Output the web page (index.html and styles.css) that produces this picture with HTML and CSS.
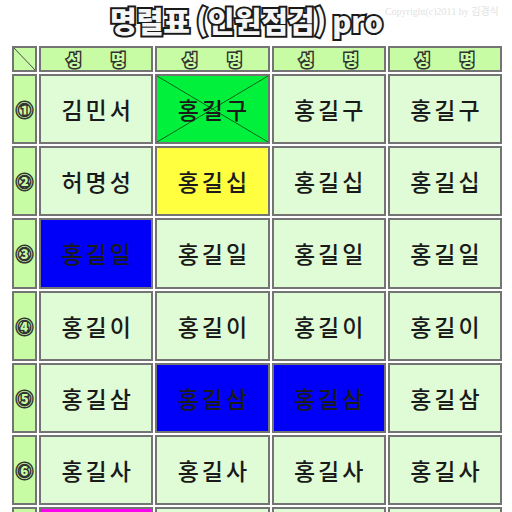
FILE: index.html
```html
<!DOCTYPE html>
<html lang="ko">
<head>
<meta charset="utf-8">
<link rel="stylesheet" href="styles.css">
</head>
<body>
<header class="top">
  <h1 class="title">명렬표 (인원점검) pro</h1>
  <span class="copy">Copyright(c)2011 by 김경식</span>
</header>
<table class="roster">
  <thead>
    <tr>
      <th class="corner"></th>
      <th class="head">성　명</th>
      <th class="head">성　명</th>
      <th class="head">성　명</th>
      <th class="head">성　명</th>
    </tr>
  </thead>
  <tbody>
    <tr>
      <th class="num">①</th>
      <td>김민서</td>
      <td class="green">홍길구</td>
      <td>홍길구</td>
      <td>홍길구</td>
    </tr>
    <tr>
      <th class="num">②</th>
      <td>허명성</td>
      <td class="yellow">홍길십</td>
      <td>홍길십</td>
      <td>홍길십</td>
    </tr>
    <tr>
      <th class="num">③</th>
      <td class="blue">홍길일</td>
      <td>홍길일</td>
      <td>홍길일</td>
      <td>홍길일</td>
    </tr>
    <tr>
      <th class="num">④</th>
      <td>홍길이</td>
      <td>홍길이</td>
      <td>홍길이</td>
      <td>홍길이</td>
    </tr>
    <tr>
      <th class="num">⑤</th>
      <td>홍길삼</td>
      <td class="blue">홍길삼</td>
      <td class="blue">홍길삼</td>
      <td>홍길삼</td>
    </tr>
    <tr>
      <th class="num">⑥</th>
      <td>홍길사</td>
      <td>홍길사</td>
      <td>홍길사</td>
      <td>홍길사</td>
    </tr>
    <tr>
      <th class="num"></th>
      <td class="magenta"></td>
      <td></td>
      <td></td>
      <td></td>
    </tr>
  </tbody>
</table>
</body>
</html>
```

FILE: styles.css
```css
html, body {
  margin: 0;
  padding: 0;
  background: #ffffff;
  overflow: hidden;
}
body {
  width: 512px;
  height: 512px;
  font-family: "Noto Sans CJK KR", "Noto Sans", sans-serif;
}
.top {
  display: flex;
  align-items: flex-start;
  height: 44px;
  padding-left: 110px;
  box-sizing: border-box;
}
.title {
  margin: 0;
  padding-top: 2px;
  font-size: 29px;
  line-height: 36px;
  font-weight: 900;
  letter-spacing: 0;
  word-spacing: -2px;
  color: #f6f6f6;
  -webkit-text-stroke: 4px #1a1a1a;
  paint-order: stroke fill;
  white-space: nowrap;
}
.copy {
  margin-left: 2px;
  margin-top: 3px;
  font-family: "Liberation Serif", "Noto Sans CJK KR", serif;
  font-size: 10px;
  color: #e2e2e2;
  white-space: nowrap;
}
.roster {
  margin-left: 10px;
  width: 494px;
  border-collapse: separate;
  border-spacing: 2px;
  table-layout: fixed;
}
.roster th, .roster td {
  border: 2px solid #747474;
  padding: 0;
  text-align: center;
  vertical-align: middle;
}
.corner {
  width: 21px;
  height: 22px;
  background-color: #c8fca4;
  background-image: linear-gradient(to top right, transparent calc(50% - 0.8px), #555 50%, transparent calc(50% + 0.8px));
}
.head {
  height: 22px;
  background: #c8fca4;
  font-size: 16px;
  line-height: 20px;
  font-weight: 900;
  color: #c8fca4;
  -webkit-text-stroke: 3px #333;
  paint-order: stroke fill;
  letter-spacing: 7px;
  text-indent: 7px;
}
.num {
  height: 66.2px;
  background: #c8fca4;
  font-size: 16px;
  font-weight: 900;
  color: #c8fca4;
  -webkit-text-stroke: 3px #333;
  paint-order: stroke fill;
}
.roster td {
  height: 66.2px;
  background: #e0fcd6;
  font-size: 23px;
  font-weight: 500;
  letter-spacing: 3px;
  text-indent: 3px;
  color: #1a1a1a;
}
.roster td.green {
  background-color: #00f03c;
  background-image:
    linear-gradient(to top right, transparent calc(50% - 0.8px), #0a5a14 50%, transparent calc(50% + 0.8px)),
    linear-gradient(to bottom right, transparent calc(50% - 0.8px), #0a5a14 50%, transparent calc(50% + 0.8px));
}
.roster td.yellow {
  background: #ffff40;
}
.roster td.blue {
  background: #0000f8;
}
.roster td.magenta {
  background: #ff00f0;
}
```
